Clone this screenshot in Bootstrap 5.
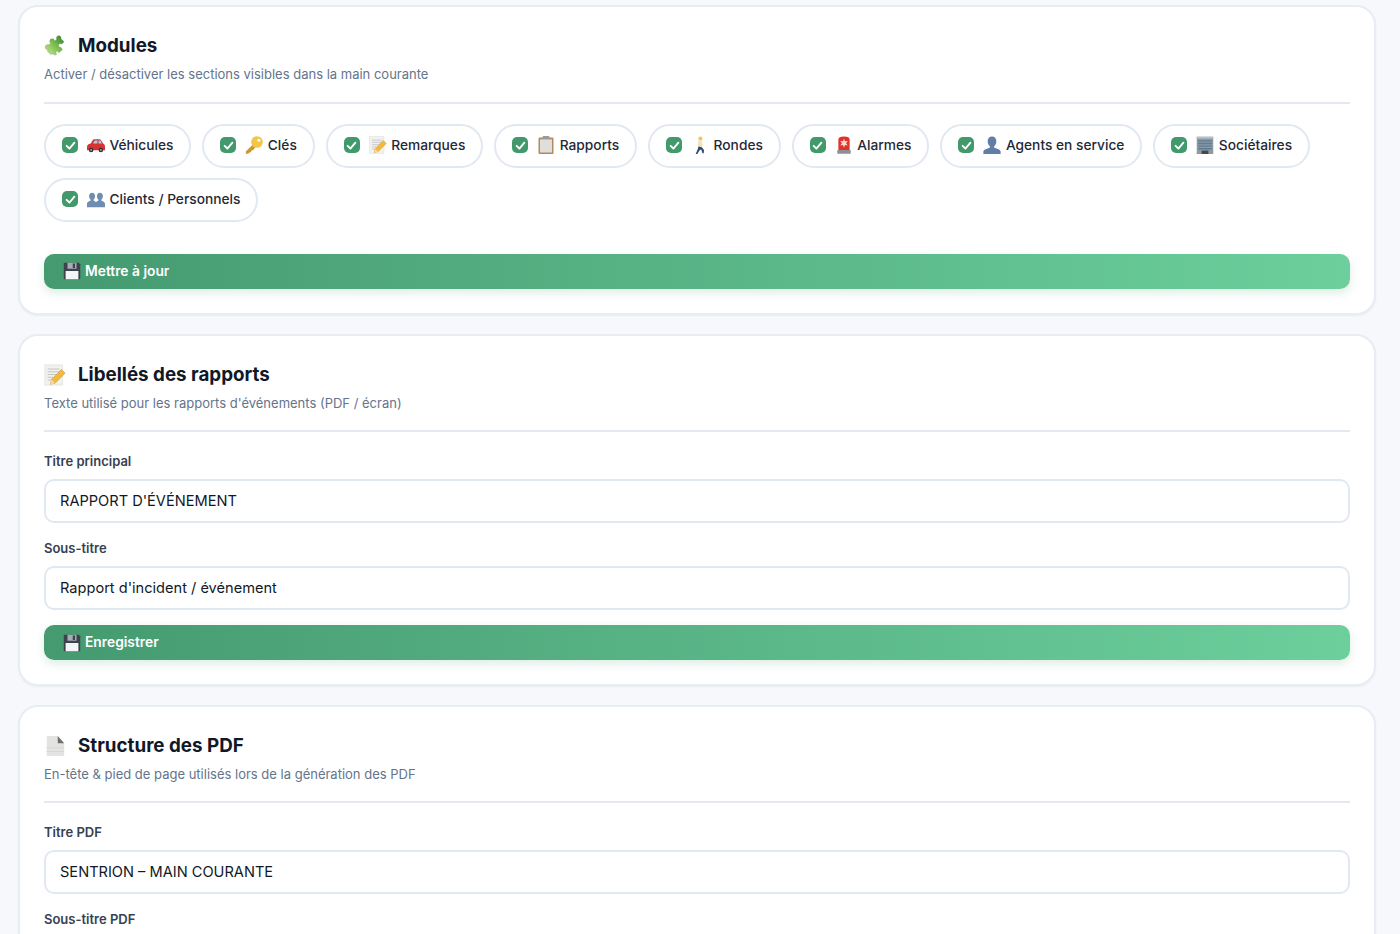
<!DOCTYPE html>
<html lang="fr">
<head>
<meta charset="utf-8">
<title>Paramètres</title>
<link href="https://cdn.jsdelivr.net/npm/bootstrap@5.3.0/dist/css/bootstrap.min.css" rel="stylesheet">
<style>
html,body{height:934px;overflow:hidden}
body{background:#f7f8fb;font-family:Inter,"Liberation Sans",sans-serif;color:#111827;padding:5.4px 24px 0 18px}
.panel{background:#fff;border:2px solid #e8ecf3;border-radius:20px;padding:24px;margin-bottom:18.7px;box-shadow:0 1px 2px rgba(30,41,59,.06)}
.panel-title{font-size:18.8px;font-weight:700;line-height:30px;margin:0;color:#111827;gap:12px}
.panel-title svg{width:22px;height:24px;flex:none}
.panel-sub{font-size:13px;line-height:20px;color:#64748b;margin:3px 0 0}
.panel-rule{height:2px;background:#e4e9f1;margin:17.6px 0 20px}
.fields-rule{margin:17px 0 19.5px}
.chips{gap:10px 11px;margin-bottom:32px}
.chip{height:44px;border:2px solid #e2e8f2;border-radius:22px;padding:0 16px 1px;font-size:13.75px;font-weight:500;color:#1f2937;background:#fff;margin:0}
.tick{width:16px;height:16px;border-radius:5px;background:#429a6c;flex:none;margin-right:9px}
.tick svg{width:13px;height:13px;display:block}
.emo{width:18px;height:18px;flex:none;margin-right:4.4px}
.save{height:35px;border:0;border-radius:10px;padding:0 19px;font-size:13.8px;font-weight:600;color:#fff;background:linear-gradient(90deg,#459a70,#6ccf9c);box-shadow:0 4px 10px rgba(69,154,112,.18)}
.save svg{width:18px;height:18px;margin-right:4px;flex:none}
.save:hover,.save:active{color:#fff}
.fld-label{font-size:13px;font-weight:600;line-height:20px;color:#374151;margin:0 0 7.5px}
.fld{height:44px;border:2px solid #e2e8f2;border-radius:10px;padding:0 14px;font-size:14.6px;color:#111827;margin-bottom:15.5px}
.fld:focus{border-color:#e2e8f2;box-shadow:none}
</style>
</head>
<body>
<svg width="0" height="0" class="position-absolute">
<defs>
<linearGradient id="gz" x1="1" y1="0" x2="0" y2="1"><stop offset="0" stop-color="#2f7d33"/><stop offset=".5" stop-color="#7fbe50"/><stop offset="1" stop-color="#c9ea9c"/></linearGradient>
<symbol id="i-tick" viewBox="0 0 12 12"><path d="M2.400 6.300 5 8.800 9.600 3.400" fill="none" stroke="#fff" stroke-width="1.700" stroke-linecap="round" stroke-linejoin="round"/></symbol>
<symbol id="i-puzzle" viewBox="0 0 24 24"><path fill="url(#gz)" stroke="#5d8f3a" stroke-width=".4" d="M11.500 6.800 13.700 4.800c-.6-2 .3-3.800 2.200-4 1.900-.3 3.200 1.300 2.600 3.300l3.400 3.200-2.400 2.500c-1.700-.8-3.200-.3-3.600 1.200-.3 1.500 1 2.800 2.700 2.700l1.300 2.300-3.700 3.300-2-2c-1.500 1-1.300 3-.4 3.700-1.700 1.200-3.700.7-4.300-.9l-1.900 1.200-4-3.700 1.700-1.700c-2 .7-4.200-.8-4-2.900.2-1.900 2.200-3 4-2.200l2-2-.7-.8c-.9-2 .3-3.900 2.300-3.800 1.100 0 1.900.5 2.400 1.200z"/></symbol>
<symbol id="i-memo" viewBox="0 0 24 24"><rect x="1" y="1" width="19" height="22" fill="#f1f1ee" stroke="#d8d8d4" stroke-width=".6"/><path d="M4 5.500h13M4 8.500h13M4 11.500h9M4 14.500h6M4 17.500h4" stroke="#b5b5b5" stroke-width=".8"/><path d="M7 22l1.200-5L19 6l4 4L12 21z" fill="#f5b93a" stroke="#b9822a" stroke-width=".5"/><path d="M7 22l1.200-5L12 21z" fill="#f3d9b0"/></symbol>
<symbol id="i-page" viewBox="0 0 24 24"><path d="M3 1h12l7 8v14H3z" fill="#e3e3e1"/><path d="M15 1v8h7z" fill="#6f6f6f"/><path d="M3 14h19M3 18h19" stroke="#d2d2cf" stroke-width=".8"/></symbol>
<symbol id="i-car" viewBox="0 0 24 24"><path d="M0 15c0-3 1.500-4.500 5-5l3-5c.4-.5 1-.8 1.700-.8h7c.8 0 1.400.4 1.800 1.100L21.500 10c1.700.7 2.500 2 2.500 5v4H0z" fill="#d7332f"/><path d="M8 10l2.300-4h3.500v4zM15.300 6h2.500l2 4h-4.500z" fill="#a9cfe6"/><circle cx="5.500" cy="18.500" r="3" fill="#2f2f33"/><circle cx="18.500" cy="18.500" r="3" fill="#2f2f33"/><circle cx="5.500" cy="18.500" r="1.200" fill="#b9b9bd"/><circle cx="18.500" cy="18.500" r="1.200" fill="#b9b9bd"/></symbol>
<symbol id="i-key" viewBox="0 0 24 24"><path d="M12 10 1 20.500 1.200 23.500l3.300.2 1.300-1.700 2.200-.2.500-2.400 2.200-.5 5-6z" fill="#c99a2e"/><circle cx="16" cy="8" r="7.800" fill="#f3c649"/><circle cx="18.500" cy="5.500" r="2" fill="#fff"/></symbol>
<symbol id="i-clip" viewBox="0 0 24 24"><rect x="2" y="2" width="20" height="22" rx="1.500" fill="#b48a5c"/><rect x="4" y="4.500" width="16" height="17.500" fill="#dededc"/><rect x="7.500" y="0" width="9" height="4" rx="1" fill="#9a9a9a"/></symbol>
<symbol id="i-walk" viewBox="0 0 24 24"><circle cx="12.500" cy="3.500" r="2.800" fill="#f2c36b"/><path d="M9.500 7h5l1 6.500-1.500.8-3.500 1.700-1.500-.5z" fill="#f0e3c0"/><path d="M10 14l4.500 1 2.800 3.500-.3 4.500h-1.700l-1.800-5.500-2.500 2.200L8.500 24H6.200l2.800-6.500z" fill="#2e4a70"/></symbol>
<symbol id="i-siren" viewBox="0 0 24 24"><path d="M4.500 4.500C4.500 2 7 .5 12 .5s7.500 1.500 7.500 4V19h-15z" fill="#e0322d"/><path d="M12 3.500l1.300 3.500 3.700-.5-2.200 3 2.200 3-3.700-.5L12 15.500 10.700 12l-3.700.5 2.200-3-2.200-3 3.700.5z" fill="#ffd9c4"/><rect x="3" y="18.500" width="18" height="5" rx="1" fill="#8d8f94"/></symbol>
<symbol id="i-user" viewBox="0 0 24 24"><path d="M12 .5c3.600 0 5.800 2.700 5.800 6.500 0 3.200-1.300 5.600-3 6.800v1.400c1 1 7.700 1.800 8.700 5.300v3.500H.5V20.500c1-3.500 7.700-4.300 8.700-5.300v-1.400c-1.700-1.200-3-3.600-3-6.800C6.200 3.200 8.400.5 12 .5z" fill="#5f7fa6"/></symbol>
<symbol id="i-users" viewBox="0 0 24 24"><path d="M6.800 3.500c2.500 0 4 1.900 4 4.500 0 2.200-.9 4-2 4.800v1.100c.8.900 2.300 1.300 3.200 2.200.9-.9 2.400-1.300 3.200-2.200v-1.100c-1.100-.8-2-2.600-2-4.800 0-2.600 1.500-4.500 4-4.500s4 1.900 4 4.500c0 2.200-.9 4-2 4.800v1.100c.8 1.100 4.800 1.300 4.800 4.300V23H0v-4.800c0-3 4-3.200 4.800-4.300v-1.100c-1.100-.8-2-2.600-2-4.800 0-2.600 1.500-4.500 4-4.500z" fill="#6f8db3"/></symbol>
<symbol id="i-bldg" viewBox="0 0 24 24"><rect x="1" y="1" width="22" height="23" fill="#8d9aa3"/><rect x="1" y="1" width="22" height="2.500" fill="#b8bfc4"/><path d="M3 6.500h18M3 10h18M3 13.500h18M3 17h18" stroke="#5d7d96" stroke-width="1.900"/><rect x="7.500" y="19.500" width="9" height="4.500" fill="#45494d"/></symbol>
<symbol id="i-disk" viewBox="0 0 24 24"><path d="M1 2c0-.6.4-1 1-1h19l2 2v19c0 .6-.4 1-1 1H2c-.6 0-1-.4-1-1z" fill="#3d434c"/><rect x="6" y="1" width="12" height="8" fill="#a7adb5"/><rect x="13" y="2" width="3" height="6" fill="#3d434c"/><rect x="3.500" y="12" width="17" height="11" fill="#f4f5f7"/></symbol>
</defs>
</svg>

<section class="panel">
  <h2 class="panel-title d-flex align-items-center"><svg><use href="#i-puzzle"/></svg>Modules</h2>
  <p class="panel-sub">Activer / désactiver les sections visibles dans la main courante</p>
  <div class="panel-rule"></div>
  <div class="chips d-flex flex-wrap">
    <label class="chip d-flex align-items-center"><span class="tick d-flex align-items-center justify-content-center"><svg><use href="#i-tick"/></svg></span><svg class="emo"><use href="#i-car"/></svg>Véhicules</label>
    <label class="chip d-flex align-items-center"><span class="tick d-flex align-items-center justify-content-center"><svg><use href="#i-tick"/></svg></span><svg class="emo"><use href="#i-key"/></svg>Clés</label>
    <label class="chip d-flex align-items-center"><span class="tick d-flex align-items-center justify-content-center"><svg><use href="#i-tick"/></svg></span><svg class="emo"><use href="#i-memo"/></svg>Remarques</label>
    <label class="chip d-flex align-items-center"><span class="tick d-flex align-items-center justify-content-center"><svg><use href="#i-tick"/></svg></span><svg class="emo"><use href="#i-clip"/></svg>Rapports</label>
    <label class="chip d-flex align-items-center"><span class="tick d-flex align-items-center justify-content-center"><svg><use href="#i-tick"/></svg></span><svg class="emo"><use href="#i-walk"/></svg>Rondes</label>
    <label class="chip d-flex align-items-center"><span class="tick d-flex align-items-center justify-content-center"><svg><use href="#i-tick"/></svg></span><svg class="emo"><use href="#i-siren"/></svg>Alarmes</label>
    <label class="chip d-flex align-items-center"><span class="tick d-flex align-items-center justify-content-center"><svg><use href="#i-tick"/></svg></span><svg class="emo"><use href="#i-user"/></svg>Agents en service</label>
    <label class="chip d-flex align-items-center"><span class="tick d-flex align-items-center justify-content-center"><svg><use href="#i-tick"/></svg></span><svg class="emo"><use href="#i-bldg"/></svg>Sociétaires</label>
    <label class="chip d-flex align-items-center"><span class="tick d-flex align-items-center justify-content-center"><svg><use href="#i-tick"/></svg></span><svg class="emo"><use href="#i-users"/></svg>Clients / Personnels</label>
  </div>
  <button type="button" class="btn save w-100 d-flex align-items-center"><svg><use href="#i-disk"/></svg>Mettre à jour</button>
</section>

<section class="panel">
  <h2 class="panel-title d-flex align-items-center"><svg><use href="#i-memo"/></svg>Libellés des rapports</h2>
  <p class="panel-sub">Texte utilisé pour les rapports d'événements (PDF / écran)</p>
  <div class="panel-rule fields-rule"></div>
  <label class="fld-label d-block">Titre principal</label>
  <input class="form-control fld" value="RAPPORT D'ÉVÉNEMENT">
  <label class="fld-label d-block">Sous-titre</label>
  <input class="form-control fld" value="Rapport d'incident / événement">
  <button type="button" class="btn save w-100 d-flex align-items-center"><svg><use href="#i-disk"/></svg>Enregistrer</button>
</section>

<section class="panel">
  <h2 class="panel-title d-flex align-items-center"><svg><use href="#i-page"/></svg>Structure des PDF</h2>
  <p class="panel-sub">En-tête &amp; pied de page utilisés lors de la génération des PDF</p>
  <div class="panel-rule fields-rule"></div>
  <label class="fld-label d-block">Titre PDF</label>
  <input class="form-control fld" value="SENTRION – MAIN COURANTE">
  <label class="fld-label d-block">Sous-titre PDF</label>
</section>
<script src="https://cdn.jsdelivr.net/npm/bootstrap@5.3.0/dist/js/bootstrap.bundle.min.js"></script>
</body>
</html>
